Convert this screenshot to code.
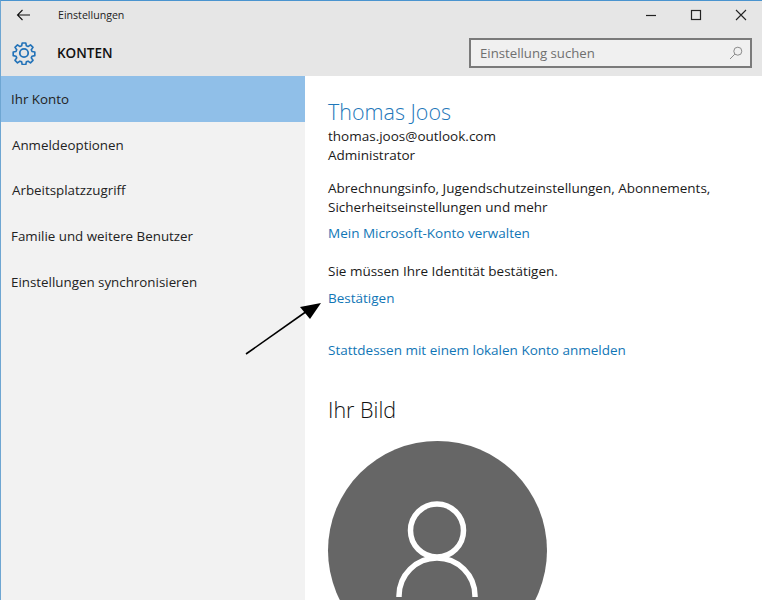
<div class="win">
  <div class="top">
    <div class="titlebar">
      <svg class="back" width="16" height="12" viewBox="0 0 16 12" fill="none" stroke="#111" stroke-width="1.1"><path d="M14 6H1.500M6.500 1 1.500 6l5 5"/></svg>
      <span class="title">Einstellungen</span>
      <div class="controls">
        <svg width="12" height="12" viewBox="0 0 12 12" fill="none" stroke="#222" stroke-width="1.2"><path d="M1 6.500h10"/></svg>
        <svg width="12" height="12" viewBox="0 0 12 12" fill="none" stroke="#222" stroke-width="1.2"><rect x="1.500" y="1.500" width="9" height="9"/></svg>
        <svg width="12" height="12" viewBox="0 0 12 12" fill="none" stroke="#222" stroke-width="1.1"><path d="M1 1l10 10M11 1 1 11"/></svg>
      </div>
    </div>
    <div class="headbar">
      <svg class="gear" width="24" height="24" viewBox="0 0 24 24" fill="none" stroke="#2272b8" stroke-width="1.8" stroke-linejoin="round"><path d="M10 1.500h4l.6 3.200 1.900.8 2.700-1.900 2.800 2.800-1.900 2.700.8 1.900 3.100.6v4l-3.100.6-.8 1.900 1.900 2.700-2.800 2.800-2.700-1.900-1.900.8-.6 3.100h-4l-.6-3.100-1.900-.8-2.700 1.900-2.800-2.800 1.900-2.700-.8-1.900-3.100-.6v-4l3.100-.6.8-1.900-1.900-2.700 2.800-2.800 2.700 1.900 1.900-.8z" transform="translate(1.200 .6) scale(.9)"/><circle cx="12" cy="12" r="4.200"/></svg>
      <span class="section">KONTEN</span>
      <div class="search">
        <span>Einstellung suchen</span>
        <svg width="14" height="14" viewBox="0 0 14 14" fill="none" stroke="#8a8a8a" stroke-width="1"><circle cx="8.800" cy="5.200" r="4"/><path d="M5.800 8.200 1 13"/></svg>
      </div>
    </div>
  </div>
  <div class="body">
    <nav>
      <div class="item sel">Ihr Konto</div>
      <div class="item in1">Anmeldeoptionen</div>
      <div class="item in1 up">Arbeitsplatzzugriff</div>
      <div class="item up">Familie und weitere Benutzer</div>
      <div class="item up">Einstellungen synchronisieren</div>
    </nav>
    <main>
      <h1>Thomas Joos</h1>
      <p class="lines who">thomas.joos@outlook.com<br />Administrator</p>
      <p class="lines desc">Abrechnungsinfo, Jugendschutzeinstellungen, Abonnements,<br />Sicherheitseinstellungen und mehr</p>
      <a class="l1">Mein Microsoft-Konto verwalten</a>
      <p class="verify">Sie müssen Ihre Identität bestätigen.</p>
      <a class="l2">Bestätigen</a>
      <a class="l3">Stattdessen mit einem lokalen Konto anmelden</a>
      <h2>Ihr Bild</h2>
      <div class="avatar">
        <svg width="219" height="219" viewBox="0 0 219 219" fill="none" stroke="#fff" stroke-width="5.500"><circle cx="109" cy="89.500" r="26.500"/><path d="M71 156v-1a38 38 0 0 1 76 0v1"/></svg>
      </div>
    </main>
  </div>
  <svg class="arrow" width="80" height="56" viewBox="0 0 80 56"><path d="M1 52 62 9" stroke="#000" stroke-width="1.600"/><path d="M76 1 65 17 55 5z" fill="#000"/></svg>
</div>

<style>
  :global(body) { margin: 0; }
  .win {
    position: relative; width: 762px; height: 600px; overflow: hidden; box-sizing: border-box;
    border-top: 1px solid #4a94cf; border-left: 1px solid #6ea6d2;
    font-family: "Open Sans", "Noto Sans", sans-serif; background: #fff; color: #1a1a1a;
  }
  .top { background: #e6e6e6; height: 75px; }
  .titlebar { height: 28px; display: flex; align-items: center; }
  .back { margin-left: 15px; }
  .title { margin-left: 26px; font-size: 10.6px; color: #222; }
  .controls { margin-left: auto; display: flex; gap: 33px; margin-right: 15px; }
  .headbar { height: 47px; display: flex; align-items: center; }
  .gear { margin-left: 11px; margin-top: 1px; }
  .section { margin-left: 21px; font-size: 13.5px; font-weight: 600; color: #111; }
  .search {
    margin-left: auto; margin-right: 10px; margin-top: 1px; width: 283px; height: 30px; box-sizing: border-box;
    border: 2px solid #7a7a7a; background: #f0f0f0; display: flex; align-items: center;
    justify-content: space-between; padding: 0 7px 0 9px; font-size: 13.2px; color: #6f6f6f;
  }
  .body { display: flex; height: 524px; }
  nav { width: 304px; background: #f2f2f2; font-size: 13.35px; color: #222; }
  .item { height: 46px; display: flex; align-items: center; padding-left: 10px; box-sizing: border-box; padding-bottom: 1px; }
  .in1 { padding-left: 11px; }
  .up { padding-bottom: 3px; }
  .sel { background: #90bfe8; }
  main { padding-left: 23px; font-size: 13.5px; flex: 1; display: flex; flex-direction: column; align-items: flex-start; }
  h1 { margin: 21px 0 0; font-size: 21.5px; line-height: 30px; font-weight: 300; color: #1f78ba; }
  p { margin: 0; }
  .lines { line-height: 19px; color: #1a1a1a; }
  .who { line-height: 18.500px; }
  .desc { margin-top: 15px; }
  a { color: #1176b6; line-height: 19px; }
  .l1 { margin-top: 7px; }
  .verify { margin-top: 19px; line-height: 19px; }
  .l2 { margin-top: 8px; }
  .l3 { margin-top: 33px; }
  h2 { margin: 35px 0 0; font-size: 21.5px; line-height: 30px; font-weight: 300; color: #111; }
  .avatar { margin-top: 16px; width: 219px; height: 219px; border-radius: 50%; background: #666; flex: none; }
  .arrow { position: absolute; left: 244px; top: 301px; }
</style>
